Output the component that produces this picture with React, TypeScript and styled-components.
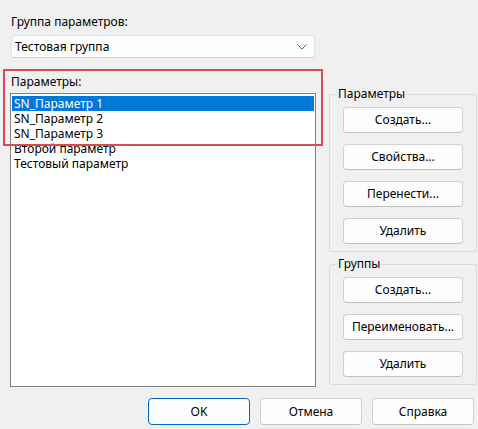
import React from "react";
import styled, { createGlobalStyle } from "styled-components";

const Global = createGlobalStyle`
  html, body { margin: 0; padding: 0; background: #f0f0f0; }
  body { font-family: "Noto Sans", "Open Sans", sans-serif; font-size: 12px; color: #000; }
  * { box-sizing: border-box; }
`;

const Dialog = styled.div`
  width: 478px;
  height: 429px;
  background: #f0f0f0;
  padding: 14px 0 0 10px;
  display: flex;
  flex-direction: column;
`;

const Label = styled.div`
  line-height: 16px;
  height: 16px;
  padding-left: 1px;
  white-space: nowrap;
`;

const Combo = styled.div`
  margin: 5px 0 0 1px;
  width: 304px;
  height: 23px;
  background: #fdfdfd;
  border: 1px solid #e2e2e2;
  border-bottom-color: #cfcfcf;
  border-radius: 3px;
  display: flex;
  align-items: center;
  justify-content: space-between;
  padding: 0 7px 0 3px;
  line-height: 16px;
`;

const Main = styled.div`
  display: grid;
  grid-template-columns: 306px 148px;
  column-gap: 13px;
  height: 329px;
`;

const LeftCol = styled.div`
  position: relative;
  padding-top: 16px;
  display: flex;
  flex-direction: column;
`;

const Highlight = styled.div`
  position: absolute;
  left: -7px;
  top: 11px;
  width: 320px;
  height: 77px;
  border: 2px solid #dc4a50;
  pointer-events: none;
`;

const ListBox = styled.div`
  margin-top: 3px;
  height: 294px;
  background: #fff;
  border: 1px solid #828282;
  padding: 2px 1px;
`;

const Item = styled.div<{ $selected?: boolean }>`
  height: 15px;
  line-height: 15px;
  padding-left: 2px;
  white-space: nowrap;
  background: ${(p) => (p.$selected ? "#0078d7" : "transparent")};
  color: ${(p) => (p.$selected ? "#fff" : "#000")};
`;

const RightCol = styled.div`
  padding-top: 30px;
  display: flex;
  flex-direction: column;
`;

const Group = styled.fieldset<{ $top?: number }>`
  margin: ${(p) => p.$top ?? 0}px 0 0 0;
  border: 1px solid #d9d9d9;
  border-radius: 3px;
  padding: 7px 12px 7px 13px;
  display: flex;
  flex-direction: column;
  gap: 11px;
  min-width: 0;
`;

const Legend = styled.legend`
  margin-left: -6px;
  padding: 0 1px;
  line-height: 12px;
  height: 12px;
  font-size: 12px;
`;

const Button = styled.button<{ $default?: boolean; $w?: number; $h?: number }>`
  font-family: inherit;
  font-size: 12px;
  color: #000;
  width: ${(p) => p.$w ?? 120}px;
  height: ${(p) => p.$h ?? 26}px;
  background: #fdfdfd;
  border: 1px solid ${(p) => (p.$default ? "#0067c0" : "#d0d0d0")};
  border-bottom-color: ${(p) => (p.$default ? "#0067c0" : "#c0c0c0")};
  box-shadow: ${(p) => (p.$default ? "inset 0 0 0 1px #ffffff" : "none")};
  border-radius: 4px;
  padding: 0;
  line-height: 16px;
  cursor: default;
`;

const Footer = styled.div`
  margin-top: 11px;
  padding-right: 4px;
  display: flex;
  justify-content: flex-end;
  gap: 10px;
`;

const Chevron = () => (
  <svg width="10" height="6" viewBox="0 0 10 6" fill="none">
    <path d="M0.5 0.5 L5 5 L9.5 0.5" stroke="#5a5a5a" strokeWidth="1" />
  </svg>
);

export default function App() {
  const items = [
    "SN_Параметр 1",
    "SN_Параметр 2",
    "SN_Параметр 3",
    "Второй параметр",
    "Тестовый параметр",
  ];
  return (
    <>
      <Global />
      <Dialog>
        <Label>Группа параметров:</Label>
        <Combo>
          <span>Тестовая группа</span>
          <Chevron />
        </Combo>
        <Main>
          <LeftCol>
            <Label>Параметры:</Label>
            <ListBox>
              {items.map((t, i) => (
                <Item key={t} $selected={i === 0}>
                  {t}
                </Item>
              ))}
            </ListBox>
            <Highlight />
          </LeftCol>
          <RightCol>
            <Group>
              <Legend>Параметры</Legend>
              <Button>Создать...</Button>
              <Button>Свойства...</Button>
              <Button>Перенести...</Button>
              <Button>Удалить</Button>
            </Group>
            <Group $top={6}>
              <Legend>Группы</Legend>
              <Button>Создать...</Button>
              <Button>Переименовать...</Button>
              <Button>Удалить</Button>
            </Group>
          </RightCol>
        </Main>
        <Footer>
          <Button $default $w={102} $h={27}>
            OK
          </Button>
          <Button $w={102} $h={27}>
            Отмена
          </Button>
          <Button $w={102} $h={27}>
            Справка
          </Button>
        </Footer>
      </Dialog>
    </>
  );
}
